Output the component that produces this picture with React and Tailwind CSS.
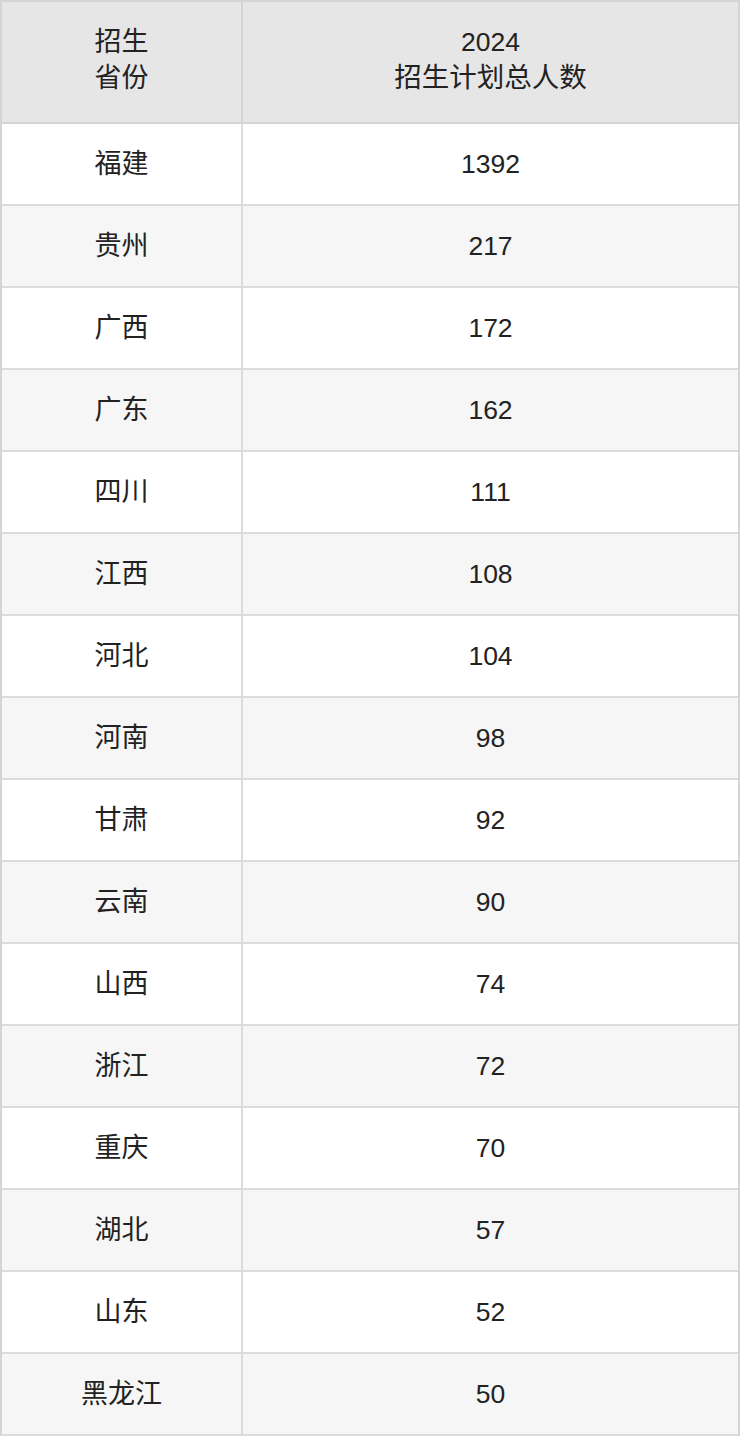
import React from "react"

const rows = [
  ["福建", "1392"],
  ["贵州", "217"],
  ["广西", "172"],
  ["广东", "162"],
  ["四川", "111"],
  ["江西", "108"],
  ["河北", "104"],
  ["河南", "98"],
  ["甘肃", "92"],
  ["云南", "90"],
  ["山西", "74"],
  ["浙江", "72"],
  ["重庆", "70"],
  ["湖北", "57"],
  ["山东", "52"],
  ["黑龙江", "50"],
]

const App = () => {
  return (
    <div className="w-[740px] bg-white font-['Liberation_Sans','Noto_Sans_CJK_SC',sans-serif] text-[26.5px] leading-[36px] text-[#222]">
      <div className="border-2 border-[#d4d4d4] border-b-0">
        <div className="grid grid-cols-[241px_1fr] bg-[#e6e6e6] border-b-2 border-[#d4d4d4]">
          <div className="h-[120px] pb-[5px] flex flex-col items-center justify-center border-r-2 border-[#d4d4d4] text-[27px]">
            <div>招生</div>
            <div>省份</div>
          </div>
          <div className="h-[120px] pb-[5px] flex flex-col items-center justify-center">
            <div>2024</div>
            <div className="text-[27.5px]">招生计划总人数</div>
          </div>
        </div>
        {rows.map(([prov, num], i) => (
          <div
            key={prov}
            className={`grid grid-cols-[241px_1fr] border-b-2 border-[#dcdcdc] ${
              i % 2 === 1 ? "bg-[#f6f6f6]" : "bg-white"
            }`}
          >
            <div className="h-[80px] flex items-center justify-center border-r-2 border-[#dcdcdc] text-[27px]">
              {prov}
            </div>
            <div className="h-[80px] flex items-center justify-center">
              {num}
            </div>
          </div>
        ))}
      </div>
    </div>
  )
}

export default App
